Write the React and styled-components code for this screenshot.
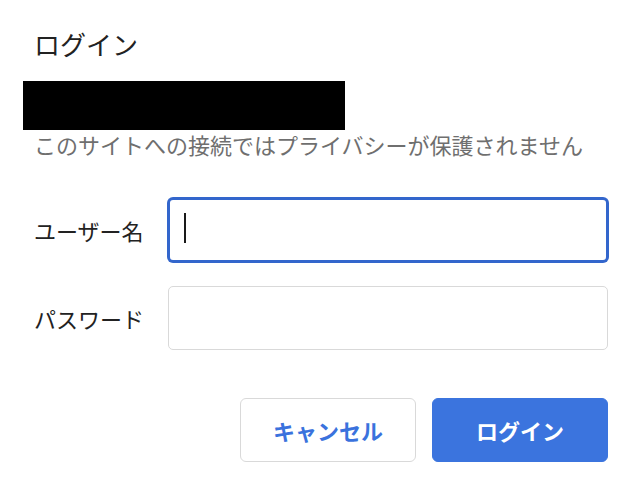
import React from 'react';
import styled, { createGlobalStyle } from 'styled-components';

const GlobalStyle = createGlobalStyle`
  html, body {
    margin: 0;
    padding: 0;
    background: #ffffff;
  }
  body {
    font-family: "Noto Sans CJK JP", "Noto Sans", sans-serif;
    -webkit-font-smoothing: antialiased;
  }
`;

// Dialog shell
const Dialog = styled.div`
  box-sizing: border-box;
  width: 638px;
  height: 492px;
  padding: 28px 30px 30px 34px;
  background: #ffffff;
  display: flex;
  flex-direction: column;
`;

const Title = styled.h1`
  margin: 0;
  font-size: 26px;
  line-height: 32px;
  font-weight: 400;
  color: #222222;
`;

const Redacted = styled.div`
  width: 322px;
  height: 49px;
  margin: 21px 0 0 -11px;
  background: #000000;
`;

const Notice = styled.p`
  margin: 0;
  font-size: 22px;
  line-height: 28px;
  color: #6f6f6f;
  white-space: nowrap;
`;

// Form
const Form = styled.form`
  margin-top: 40px;
  display: grid;
  grid-template-columns: 134px 1fr;
  row-gap: 24px;
  align-items: center;
`;

const Label = styled.label`
  font-size: 22px;
  color: #222222;
  white-space: nowrap;
`;

const FieldWrap = styled.div`
  position: relative;
`;

const Input = styled.input`
  box-sizing: border-box;
  display: block;
  width: 100%;
  height: 64px;
  padding: 0 14px;
  font-family: inherit;
  font-size: 22px;
  color: #222222;
  background: #ffffff;
  border: ${p => (p.$active ? '2px solid #3366cc' : '1px solid #d9d9d9')};
  border-radius: 5px;
  box-shadow: ${p => (p.$active ? '0 0 0 1px #3366cc' : 'none')};
  outline: none;
  caret-color: transparent;
`;

const Caret = styled.span`
  position: absolute;
  left: 16px;
  top: 15px;
  width: 2px;
  height: 30px;
  background: #1a1a1a;
`;

// Actions
const Actions = styled.div`
  margin-top: 48px;
  display: flex;
  justify-content: flex-end;
  gap: 16px;
`;

const Button = styled.button`
  box-sizing: border-box;
  width: 176px;
  height: 64px;
  font-family: inherit;
  font-size: 22px;
  font-weight: 700;
  border-radius: 6px;
  cursor: pointer;
  border: 1px solid ${p => (p.$primary ? '#3b74de' : '#d9d9d9')};
  background: ${p => (p.$primary ? '#3b74de' : '#ffffff')};
  color: ${p => (p.$primary ? '#ffffff' : '#3a72dd')};
`;

const App = () => {
  return (
    <>
      <GlobalStyle />
      <Dialog>
        <Title>ログイン</Title>
        <Redacted />
        <Notice>このサイトへの接続ではプライバシーが保護されません</Notice>
        <Form onSubmit={e => e.preventDefault()}>
          <Label htmlFor="username">ユーザー名</Label>
          <FieldWrap>
            <Input id="username" type="text" $active />
            <Caret />
          </FieldWrap>
          <Label htmlFor="password">パスワード</Label>
          <FieldWrap>
            <Input id="password" type="password" />
          </FieldWrap>
        </Form>
        <Actions>
          <Button type="button">キャンセル</Button>
          <Button type="button" $primary>ログイン</Button>
        </Actions>
      </Dialog>
    </>
  );
};

export default App;
